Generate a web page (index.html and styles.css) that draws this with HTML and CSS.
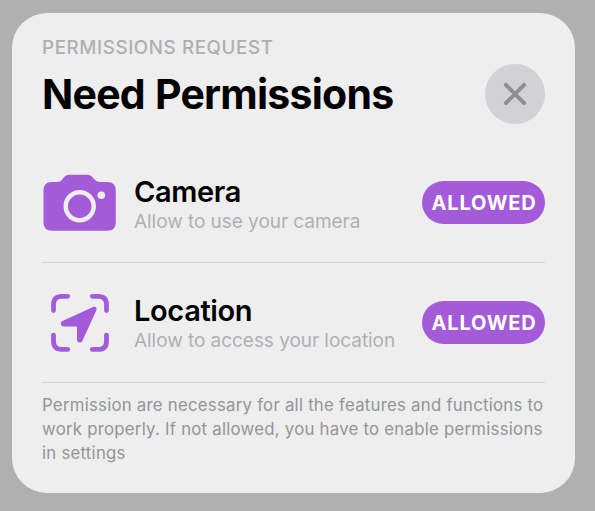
FILE: index.html
```html
<!DOCTYPE html>
<html lang="en">
<head>
<meta charset="utf-8">
<title>Need Permissions</title>
<link rel="stylesheet" href="styles.css">
</head>
<body>
<main class="card">
  <p class="kicker">PERMISSIONS REQUEST</p>
  <header class="header">
    <h1 class="title">Need Permissions</h1>
    <button class="close" aria-label="Close">
      <svg width="24" height="24" viewBox="0 0 24 24"><path d="M2.900 2.900 21.100 21.100M21.100 2.900 2.900 21.100"/></svg>
    </button>
  </header>
  <section class="row">
    <svg class="icon" width="76" height="60" viewBox="0 0 76 60">
      <path class="fill" d="M9 9H14.500C18 9 19 8 21 5.500L23 3.300C24.500 1.900 26 1.700 28 1.700H44.500C46.500 1.700 48 1.900 49.500 3.300L52 5.700C54 8 55 9 58.500 9H65.500Q73.800 9 73.800 17.500V49.500Q73.800 57.800 65.500 57.800H10Q1.500 57.800 1.500 49.500V17.500Q1.500 9 9 9Z"/>
      <circle class="lens" cx="37.700" cy="33.200" r="14"/>
      <circle class="dot" cx="59.300" cy="22.300" r="3.800"/>
    </svg>
    <div class="info">
      <h2 class="name">Camera</h2>
      <p class="detail">Allow to use your camera</p>
    </div>
    <button class="badge">ALLOWED</button>
  </section>
  <section class="row">
    <svg class="icon" width="76" height="60" viewBox="0 0 76 60">
      <path class="frame" d="M11.500 17.500V11.500Q11.500 3.300 19.700 3.300H25.700M50.300 3.300H56.300Q64.500 3.300 64.500 11.500V17.500M64.500 42.200V48.200Q64.500 56.400 56.300 56.400H50.300M25.700 56.400H19.700Q11.500 56.400 11.500 48.200V42.200"/>
      <path class="fill" d="M20.500 28 51 14C53.800 12.800 55.400 14.900 54.200 17.700L40.600 47.500C39.200 50.600 35 49.900 35 46.800V34.500Q35 33.500 34 33.500H21.700C18.500 33.500 17.800 29.200 20.500 28Z"/>
    </svg>
    <div class="info">
      <h2 class="name">Location</h2>
      <p class="detail">Allow to access your location</p>
    </div>
    <button class="badge">ALLOWED</button>
  </section>
  <p class="note">Permission are necessary for all the features and functions to<br>work properly. If not allowed, you have to enable permissions<br>in settings</p>
</main>
</body>
</html>
```
FILE: styles.css
```css
* {
  box-sizing: border-box;
}

body {
  margin: 0;
  height: 511px;
  padding: 13px 19.700px 18px 12px;
  overflow: hidden;
  background: #b0b0b0;
  font-family: Inter, "Liberation Sans", sans-serif;
}

h1, h2, p {
  margin: 0;
}

button {
  border: 0;
  font-family: inherit;
}

.card {
  height: 480px;
  padding: 24px 30px 0;
  border-radius: 35px;
  background: #eee;
  white-space: nowrap;
}

.kicker {
  height: 27px;
  line-height: 22px;
  font-size: 18.700px;
  font-weight: 500;
  letter-spacing: 0.640px;
  color: #aeaeb2;
}

.header {
  display: flex;
  align-items: center;
  justify-content: space-between;
  height: 60px;
  margin-bottom: 19px;
}

.title {
  font-size: 41px;
  font-weight: 700;
  letter-spacing: -0.750px;
  word-spacing: 1px;
  line-height: 60px;
  color: #000;
}

.close {
  display: grid;
  place-items: center;
  width: 60px;
  height: 60px;
  padding: 0;
  border-radius: 50%;
  background: #d1d1d6;
}

.close path {
  stroke: #8e8e93;
  stroke-width: 4;
  stroke-linecap: round;
}

.row {
  display: flex;
  align-items: center;
  height: 120px;
  border-bottom: 1px solid #d3d3d5;
}

.icon {
  flex: none;
  margin-right: 16px;
}

.fill {
  fill: #a45bd9;
}

.lens {
  fill: none;
  stroke: #eee;
  stroke-width: 4.500;
}

.dot {
  fill: #eee;
}

.frame {
  fill: none;
  stroke: #a45bd9;
  stroke-width: 4.800;
  stroke-linecap: round;
}

.info {
  flex: 1;
  padding-top: 4px;
}

.row + .row .info {
  padding-top: 2px;
}

.name {
  font-size: 29px;
  font-weight: 600;
  letter-spacing: -0.360px;
  line-height: 34px;
  color: #000;
}

.detail {
  font-size: 19px;
  letter-spacing: -0.045px;
  line-height: 26px;
  color: #b0b0b3;
}

.badge {
  width: 123.500px;
  height: 43.500px;
  padding: 0 0 0 1px;
  border-radius: 22px;
  background: #a45bd9;
  color: #fff;
  font-size: 20px;
  font-weight: 700;
  letter-spacing: 0.850px;
}

.note {
  padding-top: 10px;
  font-size: 16.800px;
  letter-spacing: 0.240px;
  line-height: 24px;
  color: #949497;
}
```
